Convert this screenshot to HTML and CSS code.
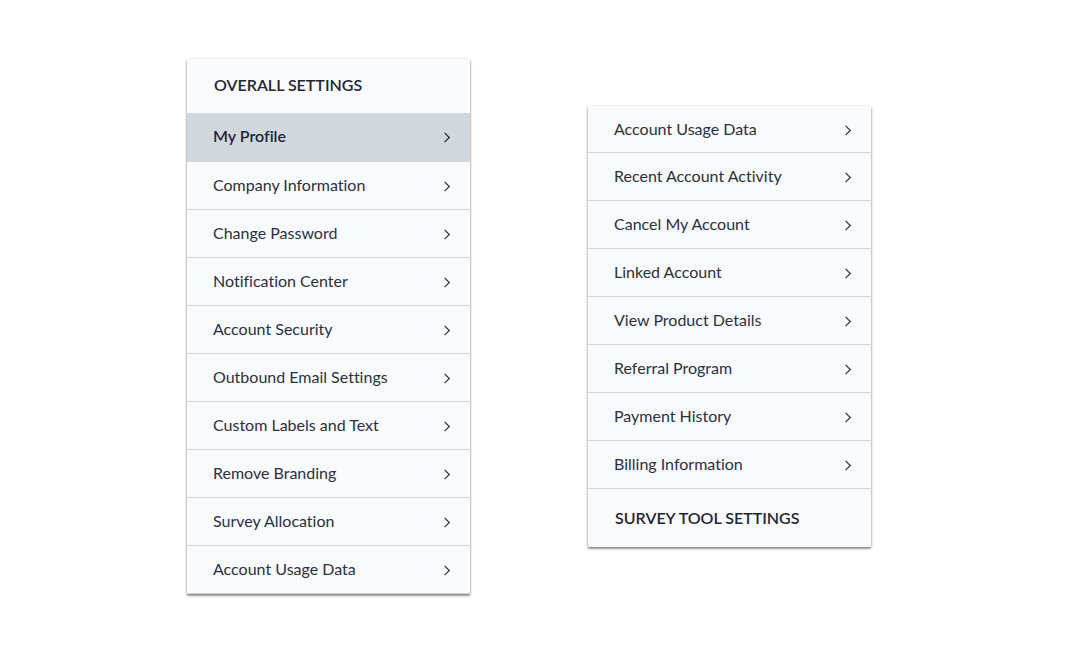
FILE: index.html
```html
<!DOCTYPE html>
<html lang="en">
<head>
<meta charset="utf-8">
<meta name="viewport" content="width=device-width, initial-scale=1">
<title>Settings</title>
<link rel="stylesheet" href="styles.css">
</head>
<body>
<svg width="0" height="0" class="symbols" aria-hidden="true">
  <symbol id="chevron" viewBox="0 0 8 11"><path d="M1.6 .9 6.3 5.5 1.6 10.1" fill="none" stroke="currentColor" stroke-width="1.2"/></symbol>
</svg>
<main class="page">
  <nav class="menu" aria-labelledby="overall">
    <h2 class="menu-title" id="overall">OVERALL SETTINGS</h2>
    <ul class="menu-list">
      <li><a class="item item-active" href="#" aria-current="page">My Profile<svg class="chevron"><use href="#chevron"/></svg></a></li>
      <li><a class="item" href="#">Company Information<svg class="chevron"><use href="#chevron"/></svg></a></li>
      <li><a class="item" href="#">Change Password<svg class="chevron"><use href="#chevron"/></svg></a></li>
      <li><a class="item" href="#">Notification Center<svg class="chevron"><use href="#chevron"/></svg></a></li>
      <li><a class="item" href="#">Account Security<svg class="chevron"><use href="#chevron"/></svg></a></li>
      <li><a class="item" href="#">Outbound Email Settings<svg class="chevron"><use href="#chevron"/></svg></a></li>
      <li><a class="item" href="#">Custom Labels and Text<svg class="chevron"><use href="#chevron"/></svg></a></li>
      <li><a class="item" href="#">Remove Branding<svg class="chevron"><use href="#chevron"/></svg></a></li>
      <li><a class="item" href="#">Survey Allocation<svg class="chevron"><use href="#chevron"/></svg></a></li>
      <li><a class="item" href="#">Account Usage Data<svg class="chevron"><use href="#chevron"/></svg></a></li>
    </ul>
  </nav>
  <nav class="menu" aria-label="Account settings">
    <ul class="menu-list">
      <li><a class="item item-first" href="#">Account Usage Data<svg class="chevron"><use href="#chevron"/></svg></a></li>
      <li><a class="item" href="#">Recent Account Activity<svg class="chevron"><use href="#chevron"/></svg></a></li>
      <li><a class="item" href="#">Cancel My Account<svg class="chevron"><use href="#chevron"/></svg></a></li>
      <li><a class="item" href="#">Linked Account<svg class="chevron"><use href="#chevron"/></svg></a></li>
      <li><a class="item" href="#">View Product Details<svg class="chevron"><use href="#chevron"/></svg></a></li>
      <li><a class="item" href="#">Referral Program<svg class="chevron"><use href="#chevron"/></svg></a></li>
      <li><a class="item" href="#">Payment History<svg class="chevron"><use href="#chevron"/></svg></a></li>
      <li><a class="item" href="#">Billing Information<svg class="chevron"><use href="#chevron"/></svg></a></li>
    </ul>
    <h2 class="menu-title menu-title-end">SURVEY TOOL SETTINGS</h2>
  </nav>
</main>
</body>
</html>
```

FILE: styles.css
```css
* {
  box-sizing: border-box;
}

body {
  margin: 0;
  background: #fff;
  color: #2b3040;
  font-family: Lato, "Liberation Sans", sans-serif;
  font-size: 16px;
  font-variant-ligatures: none;
  line-height: 20px;
}

.symbols {
  position: absolute;
}

.page {
  display: grid;
  grid-template-columns: 1fr 1fr;
  align-items: center;
  gap: 118px;
  min-height: 100vh;
  padding: 0 205px 8px 187px;
}

.menu {
  background: #f9fafc;
  border-radius: 1px;
  box-shadow: 0 1px 3px rgba(0, 0, 0, 0.4), 0 2px 2px rgba(0, 0, 0, 0.25);
}

.menu-title {
  margin: 0;
  padding: 16px 27px 18px;
  color: #1f2533;
  font-size: 16px;
  font-weight: 600;
}

.menu-title-end {
  padding: 19px 27px;
}

.menu-list {
  margin: 0;
  padding: 0;
  list-style: none;
}

.item {
  display: flex;
  align-items: center;
  justify-content: space-between;
  padding: 13px 19px 14px 26px;
  border-bottom: 1px solid #d0d7dc;
  color: inherit;
  text-decoration: none;
}

.item-active {
  padding-bottom: 15px;
  background: #d0d7dd;
  color: #1f2533;
  font-weight: 600;
}

.item-first {
  padding-bottom: 13px;
}

.chevron {
  width: 8px;
  height: 11px;
  margin-top: 2px;
}
```
